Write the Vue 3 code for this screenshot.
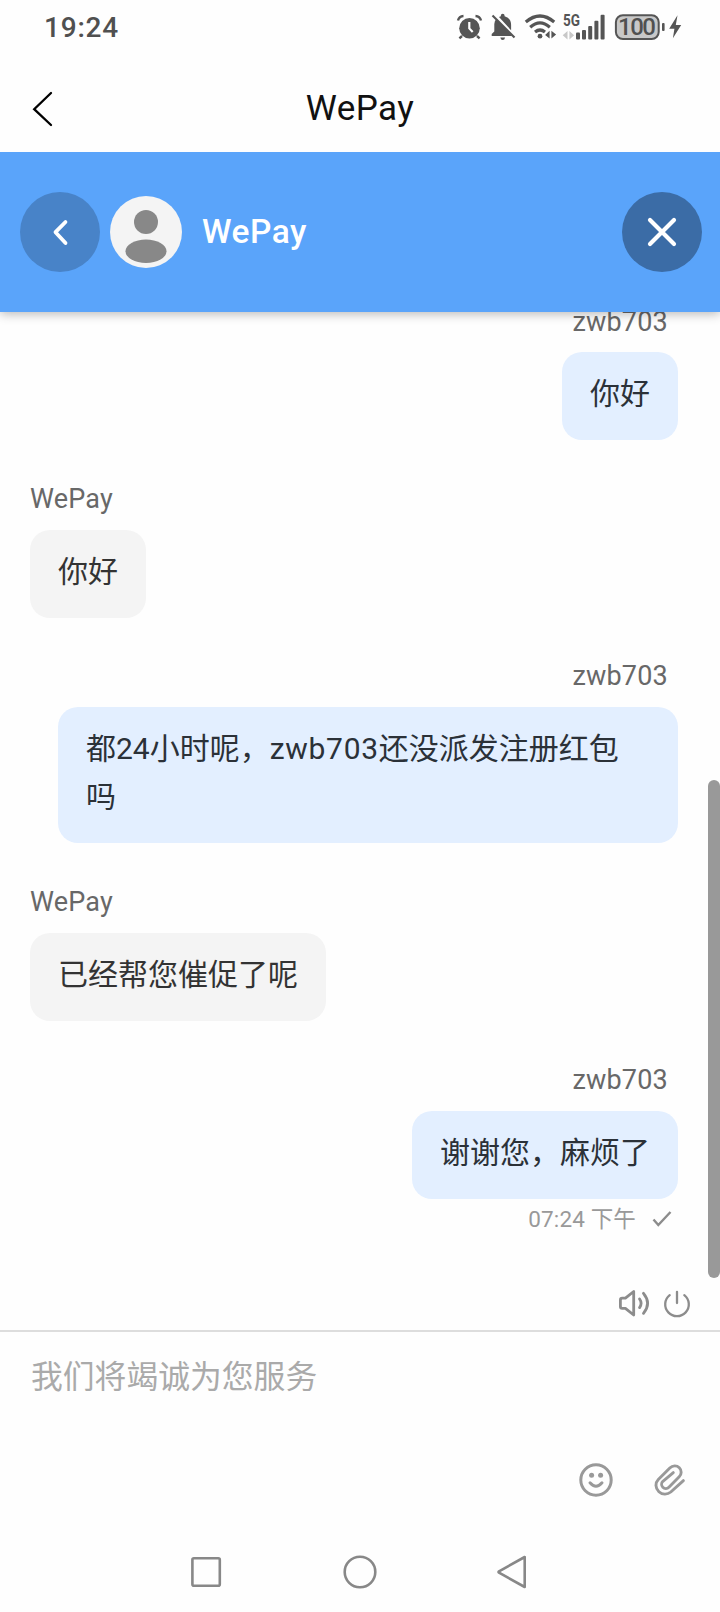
<script setup>
const messages = [
  { mine: true, name: 'zwb703', parts: ['你好'] },
  { mine: false, name: 'WePay', parts: ['你好'] },
  { mine: true, wide: true, name: 'zwb703', parts: ['都24小时呢，', { latin: 'zwb703' }, '还没派发注册红包吗'] },
  { mine: false, name: 'WePay', parts: ['已经帮您催促了呢'] },
  { mine: true, name: 'zwb703', parts: ['谢谢您，麻烦了'], time: '07:24 下午' },
]
</script>

<template>
  <div class="screen">
    <div class="status">
      <span class="clock">19:24</span>
      <div class="status-icons">
        <svg width="34" height="32" viewBox="456 11 34 32">
          <circle cx="469.5" cy="28.2" r="10.3" fill="#555" />
          <path d="M458 20.5A6 6 0 0 1 463.5 16M481 20.5A6 6 0 0 0 475.5 16M462 36l-2.6 2.3M477 36l2.6 2.3" class="ln" stroke-width="2.4" />
          <path d="M469.3 22v6.4l3.4 3.6" fill="none" stroke="#fff" stroke-width="2.2" />
        </svg>
        <svg width="34" height="32" viewBox="490 11 34 32">
          <path d="M491.7 36v-2l2.6-2.5v-7.5q0-3.3 2.4-5.3L512 35.9zM499 17l1.8-.7v-.6a1.9 1.9 0 0 1 3.8 0v.6q6.5 1.8 6.5 8.5v5.5z" fill="#555" />
          <path d="M500.3 37.5h4.8q-.5 2.5-2.4 2.5t-2.4-2.5" fill="#555" />
          <path d="M492.5 15.5L514.5 37.5" class="ln" stroke-width="2.2" />
        </svg>
        <svg width="36" height="32" viewBox="524 11 36 32">
          <path d="M525.8 22Q540 10 554.2 22M530.2 27.2Q540 18.7 549.8 27.2M535 32Q540 28 545 32" class="ln" stroke-width="3.2" />
          <circle cx="540" cy="36.2" r="2.4" fill="#555" />
          <path d="M549.6 30.8v7.8l-4.5-3.6zM551.4 30.8v7.8l4.7-4.2z" fill="#555" />
        </svg>
        <svg width="53" height="32" viewBox="560 11 53 32">
          <text x="563" y="26.3" class="net" textLength="17" lengthAdjust="spacingAndGlyphs">5G</text>
          <path d="M567.5 31v8.5l-4.8-4.2zM569.4 31v8.5l4.7-4.2z" fill="#c8c8c8" />
          <g fill="#555">
            <rect x="576" y="32.5" width="4" height="7" rx="1" />
            <rect x="582" y="30" width="4" height="9.5" rx="1" />
            <rect x="588.2" y="26" width="4" height="13.5" rx="1" />
            <rect x="594.4" y="20.7" width="4" height="18.8" rx="1" />
            <rect x="600.6" y="14.7" width="4" height="24.8" rx="1" />
          </g>
        </svg>
        <svg width="70" height="32" viewBox="613 11 70 32">
          <rect x="615.9" y="15.2" width="42.8" height="23.8" rx="7" fill="#c8c8c8" stroke="#555" stroke-width="2" />
          <text x="618" y="35.3" class="batt" textLength="38" lengthAdjust="spacing">100</text>
          <rect x="662" y="23" width="2.6" height="8" rx="1" fill="#555" />
          <path d="M677.5 15.2L669.2 28.7h5.2l-1.5 9.6L681.2 25h-5.4z" fill="#555" />
        </svg>
      </div>
    </div>

    <div class="titlebar">
      <svg class="title-back" width="24" height="40" viewBox="0 0 24 40">
        <path d="M20 4L3.2 20.2L20 36" fill="none" stroke="#000" stroke-width="2.3" stroke-linecap="round" />
      </svg>
      <span class="title">WePay</span>
    </div>

    <header class="head">
      <div class="round back">
        <svg width="80" height="80" viewBox="0 0 80 80"><path d="M45.5 30L35.5 40.2L45.5 51" fill="none" stroke="#fff" stroke-width="3.8" stroke-linecap="round" stroke-linejoin="round" /></svg>
      </div>
      <svg class="avatar" width="72" height="72" viewBox="0 0 72 72">
        <circle cx="36" cy="36" r="36" fill="#f4f4f4" />
        <circle cx="36" cy="26" r="12" fill="#888" />
        <ellipse cx="36" cy="55.3" rx="20.5" ry="11.7" fill="#888" />
      </svg>
      <span class="agent">WePay</span>
      <div class="round close">
        <svg width="80" height="80" viewBox="0 0 80 80"><path d="M28 28L52 52M52 28L28 52" fill="none" stroke="#fff" stroke-width="4.2" stroke-linecap="round" /></svg>
      </div>
    </header>

    <main class="chat">
      <div class="list">
        <div v-for="(m, i) in messages" :key="i" class="msg" :class="{ mine: m.mine, wide: m.wide }">
          <div class="name">{{ m.name }}</div>
          <div class="bubble"><template v-for="(p, j) in m.parts" :key="j"><span v-if="p.latin" class="latin">{{ p.latin }}</span><template v-else>{{ p }}</template></template></div>
          <div v-if="m.time" class="meta">
            <span>{{ m.time }}</span>
            <svg width="22" height="20" viewBox="0 0 22 20"><path d="M2.5 10.5L7.3 16L19.5 3" fill="none" stroke="#8c8c8c" stroke-width="2.4" /></svg>
          </div>
        </div>
      </div>
      <div class="thumb"></div>
      <div class="tools">
        <svg width="32" height="30" viewBox="618 1288 32 30" fill="none" stroke="#8c8c8c" stroke-width="2.8" stroke-linecap="round" stroke-linejoin="round">
          <path d="M633.7 1291.5v23.5l-8.3-6.6h-3.2q-1.8 0-1.8-1.8v-6.6q0-1.8 1.8-1.8h3.2z" />
          <path d="M639.6 1299q3 4.3 0 8.6M643.5 1293.3q8.2 10 0 20" />
        </svg>
        <svg width="28" height="30" viewBox="663 1288 28 30" fill="none" stroke="#8c8c8c" stroke-width="2.3" stroke-linecap="round">
          <path d="M669.7 1295.1A11.8 11.8 0 1 0 684.3 1295.1M677 1291.8V1303" />
        </svg>
      </div>
    </main>

    <footer class="composer">
      <div class="placeholder">我们将竭诚为您服务</div>
      <div class="actions">
        <svg width="36" height="36" viewBox="0 0 36 36" fill="none" stroke="#999" stroke-width="3" stroke-linecap="round">
          <circle cx="18" cy="18" r="15.2" />
          <path d="M12 20.8q6 6.8 12 0" />
          <circle cx="13.6" cy="13.2" r="2.5" fill="#999" stroke="none" />
          <circle cx="22.6" cy="13.2" r="2.5" fill="#999" stroke="none" />
        </svg>
        <svg width="34" height="34" viewBox="653 1462 34 34" fill="none" stroke="#999" stroke-width="2.9" stroke-linecap="round" stroke-linejoin="round">
          <path d="M683.4 1479.6L670.8 1491C667.3 1494 662.2 1493.8 658.9 1490.7C655.1 1487 655.1 1481.8 658.3 1478.5L669.8 1467C672.6 1464.2 676.8 1464.2 679.3 1466.7C681.8 1469.2 681.8 1473.2 679.2 1475.8L668.9 1486.2C667.2 1487.9 664.4 1487.9 662.8 1486.3C661.2 1484.7 661.2 1482 662.9 1480.3L673.3 1471.6" />
        </svg>
      </div>
    </footer>

    <nav class="navbar">
      <svg width="36" height="36" viewBox="188 1554 36 36"><rect x="192.4" y="1558.3" width="27.4" height="27.4" rx="1.5" class="nv" /></svg>
      <svg width="36" height="36" viewBox="342 1554 36 36"><circle cx="360" cy="1572" r="15.3" class="nv" /></svg>
      <svg width="36" height="36" viewBox="494 1554 36 36"><path d="M524.7 1557V1587L499 1572.7q-1-.7 0-1.4z" class="nv" stroke-linejoin="round" /></svg>
    </nav>
  </div>
</template>

<style>
body { background: #fefefe; }
</style>

<style scoped>
.screen {
  width: 720px;
  height: 1612px;
  display: flex;
  flex-direction: column;
  overflow: hidden;
  background: #fefefe;
  font-family: Roboto, "Noto Sans CJK SC", sans-serif;
}
svg { display: block; flex: none; }
.ln { fill: none; stroke: #555; }
.nv { fill: none; stroke: #888; stroke-width: 2.6; }
.status {
  height: 54px;
  flex: none;
  display: flex;
  align-items: center;
  justify-content: space-between;
  padding: 0 37px 0 44px;
  box-sizing: border-box;
}
.clock { font-size: 28px; font-weight: 500; letter-spacing: 0.8px; color: #505050; line-height: 54px; margin-top: 1px; }
.status-icons { display: flex; }
.net { font-size: 16px; font-weight: 700; fill: #555; }
.batt { font-size: 24px; font-weight: 500; fill: #505050; }
.titlebar {
  height: 98px;
  flex: none;
  display: flex;
  align-items: center;
  padding: 14px 31px 4px;
  box-sizing: border-box;
}
.title-back { margin-top: 2px; }
.title { flex: 1; margin-right: 24px; text-align: center; font-size: 35px; letter-spacing: 0.4px; color: #111; line-height: 80px; margin-top: 2px; }
.head {
  height: 160px;
  flex: none;
  display: flex;
  align-items: center;
  padding: 0 18px 0 20px;
  box-sizing: border-box;
  background: #5aa4fa;
  box-shadow: 0 2px 10px rgba(0, 0, 0, 0.28);
  clip-path: inset(0 0 -20px 0);
  position: relative;
  z-index: 2;
}
.round { width: 80px; height: 80px; border-radius: 50%; }
.back { background: #4883c8; }
.close { background: #3b6ca6; margin-left: auto; }
.avatar { margin-left: 10px; }
.agent { margin-left: 20px; font-size: 33.5px; font-weight: 500; letter-spacing: 0.5px; color: #fff; line-height: 40px; }
.chat {
  height: 1018px;
  flex: none;
  position: relative;
  overflow: hidden;
  display: flex;
  flex-direction: column;
}
.list { margin-top: -10px; padding: 0 42px 0 30px; display: flex; flex-direction: column; gap: 38.65px; }
.msg { display: flex; flex-direction: column; align-items: flex-start; }
.mine { align-items: flex-end; }
.name { font-size: 27px; line-height: 40px; margin-bottom: 11px; color: #686868; letter-spacing: 0.2px; }
.msg:first-child .name { margin-bottom: 10px; }
.mine .name { margin-right: 10px; }
.bubble {
  box-sizing: border-box;
  max-width: 620px;
  padding: 18px 28px 22px;
  border-radius: 20px;
  font-size: 30px;
  line-height: 48px;
  background: #f4f4f4;
  color: #333;
}
.mine .bubble { background: #e3efff; color: #2b3138; }
.wide .bubble { width: 620px; padding-right: 34px; }
.latin { letter-spacing: 0.7px; }
.meta { display: flex; align-items: center; gap: 15px; margin-right: 5px; color: #999; font-size: 22.5px; line-height: 40px; letter-spacing: 0.15px; }
.thumb { position: absolute; right: 0; top: 468px; width: 12px; height: 498px; border-radius: 6px; background: #999; }
.tools { margin-top: auto; padding: 0 29px 12px; display: flex; justify-content: flex-end; gap: 13px; }
.composer {
  height: 200px;
  flex: none;
  border-top: 2px solid #ddd;
  box-sizing: border-box;
  display: flex;
  flex-direction: column;
}
.placeholder { margin: 21px 0 0 31px; font-size: 31.8px; line-height: 48px; color: #aaa; }
.actions { margin-top: 61px; padding-right: 33px; display: flex; justify-content: flex-end; align-items: center; gap: 39px; }
.navbar { height: 82px; flex: none; display: flex; align-items: center; padding: 3px 190px 1px 188px; gap: 118px; box-sizing: border-box; }
.navbar svg:last-child { margin-left: -2px; }
</style>
